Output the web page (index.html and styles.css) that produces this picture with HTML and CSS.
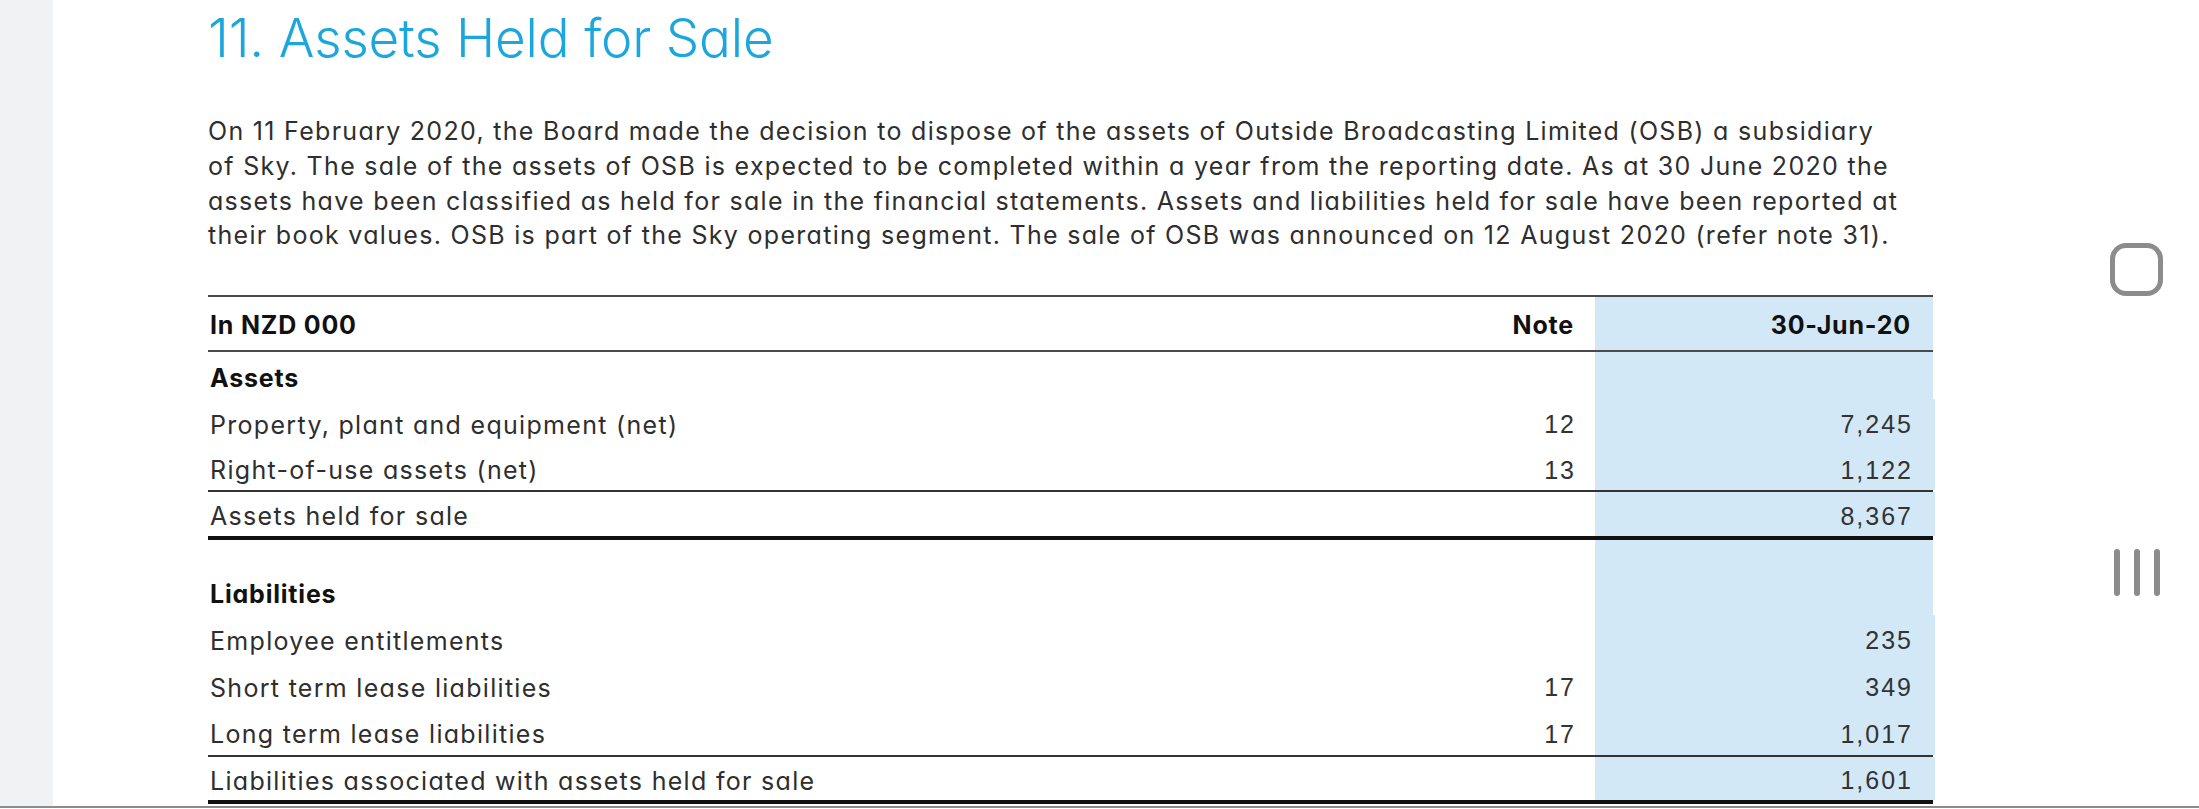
FILE: index.html
```html
<!DOCTYPE html>
<html lang="en">
<head>
<meta charset="utf-8">
<title>11. Assets Held for Sale</title>
<link rel="stylesheet" href="styles.css">
</head>
<body>
<div class="screen">
  <div class="gutter"></div>
  <main class="page">
    <h1 class="title">11. Assets Held for Sale</h1>
    <p class="intro">On 11 February 2020, the Board made the decision to dispose of the assets of Outside Broadcasting Limited (OSB) a subsidiary<br>of Sky. The sale of the assets of OSB is expected to be completed within a year from the reporting date. As at 30 June 2020 the<br>assets have been classified as held for sale in the financial statements. Assets and liabilities held for sale have been reported at<br>their book values. OSB is part of the Sky operating segment. The sale of OSB was announced on 12 August 2020 (refer note 31).</p>
    <div class="fin">
      <div class="row head">
        <div class="label">In NZD 000</div>
        <div class="note">Note</div>
        <div class="val">30-Jun-20</div>
      </div>
      <div class="row section r47">
        <div class="label">Assets</div>
        <div class="note"></div>
        <div class="val"></div>
      </div>
      <div class="row r47">
        <div class="label">Property, plant and equipment (net)</div>
        <div class="note num">12</div>
        <div class="val num">7,245</div>
      </div>
      <div class="row r44 sub">
        <div class="label">Right-of-use assets (net)</div>
        <div class="note num">13</div>
        <div class="val num">1,122</div>
      </div>
      <div class="row r44 total">
        <div class="label">Assets held for sale</div>
        <div class="note"></div>
        <div class="val num">8,367</div>
      </div>
      <div class="row spacer">
        <div class="label"></div>
        <div class="note"></div>
        <div class="val"></div>
      </div>
      <div class="row section r47">
        <div class="label">Liabilities</div>
        <div class="note"></div>
        <div class="val"></div>
      </div>
      <div class="row r47">
        <div class="label">Employee entitlements</div>
        <div class="note"></div>
        <div class="val num">235</div>
      </div>
      <div class="row r47">
        <div class="label">Short term lease liabilities</div>
        <div class="note num">17</div>
        <div class="val num">349</div>
      </div>
      <div class="row r46 sub">
        <div class="label">Long term lease liabilities</div>
        <div class="note num">17</div>
        <div class="val num">1,017</div>
      </div>
      <div class="row r43 total">
        <div class="label">Liabilities associated with assets held for sale</div>
        <div class="note"></div>
        <div class="val num">1,601</div>
      </div>
    </div>
  </main>
  <nav class="navbar" aria-label="System navigation">
    <span class="nav-home"></span>
    <span class="nav-recents"><i></i><i></i><i></i></span>
  </nav>
</div>
</body>
</html>
```

FILE: styles.css
```css
* { box-sizing: border-box; }

html, body {
  margin: 0;
  padding: 0;
  background: #ffffff;
}

body {
  width: 2199px;
  height: 809px;
  overflow: hidden;
  font-family: "Inter", "Noto Sans", sans-serif;
  font-feature-settings: "cv11" 1;
  color: #2e2e2e;
}

.screen {
  display: flex;
  height: 808px;
  border-bottom: 2px solid #8c8c8c;
  overflow: hidden;
}

.gutter {
  width: 53px;
  flex: none;
  background: #f1f2f4;
}

.page {
  flex: 1;
  padding: 7px 0 0 155px;
}

.title {
  margin: 0;
  font-size: 53px;
  line-height: 62px;
  font-weight: 300;
  color: #1ba7dd;
  letter-spacing: -0.2px;
}

.intro {
  margin: 45px 0 0;
  font-size: 25px;
  line-height: 34.8px;
  white-space: nowrap;
  letter-spacing: 1.3px;
  color: #2e2e2e;
}

.fin {
  margin-top: 42px;
  width: 1725px;
}

.row {
  display: grid;
  grid-template-columns: 1fr 187px 338px;
  font-size: 25px;
  letter-spacing: 1.3px;
}

.row > div {
  display: flex;
  align-items: center;
  padding-top: 4px;
}

.label {
  padding-left: 2px;
}

.note {
  justify-content: flex-end;
  padding-right: 21px;
}

.val {
  justify-content: flex-end;
  padding-right: 22px;
  background: #d2e8f7;
}

.num {
  font-family: "Liberation Sans", Arial, sans-serif;
  font-size: 25px;
  letter-spacing: 2px;
  color: #333333;
}

.num.note, .num.val {
  margin-right: -2px;
}

.head {
  height: 57px;
  border-top: 2px solid #4a4a4a;
  border-bottom: 2px solid #4a4a4a;
  font-weight: 700;
  color: #111111;
  letter-spacing: 0.8px;
}

.head > div {
  padding-top: 2px;
}

.section {
  font-weight: 700;
  color: #111111;
  letter-spacing: 0.8px;
}

.r47 { height: 47px; }
.r46 { height: 46px; }
.r44 { height: 44px; }
.r43 { height: 43px; }

.sub { height: 46px; border-bottom: 2px solid #333333; }
.r46.sub { height: 48px; }

.total { border-bottom: 4px solid #111111; }
.r44.total { height: 48px; }
.r43.total { height: 47px; }

.spacer { height: 28px; }

.navbar {
  width: 126px;
  flex: none;
  display: flex;
  flex-direction: column;
  align-items: center;
  padding-top: 243px;
}

.nav-home {
  width: 53px;
  height: 53px;
  border: 5px solid #8c8c8c;
  border-radius: 16px;
}

.nav-recents {
  margin-top: 253px;
  display: flex;
  gap: 14px;
  margin-left: 2px;
}

.nav-recents i {
  display: block;
  width: 6px;
  height: 47px;
  border-radius: 3px;
  background: #8c8c8c;
}
```
